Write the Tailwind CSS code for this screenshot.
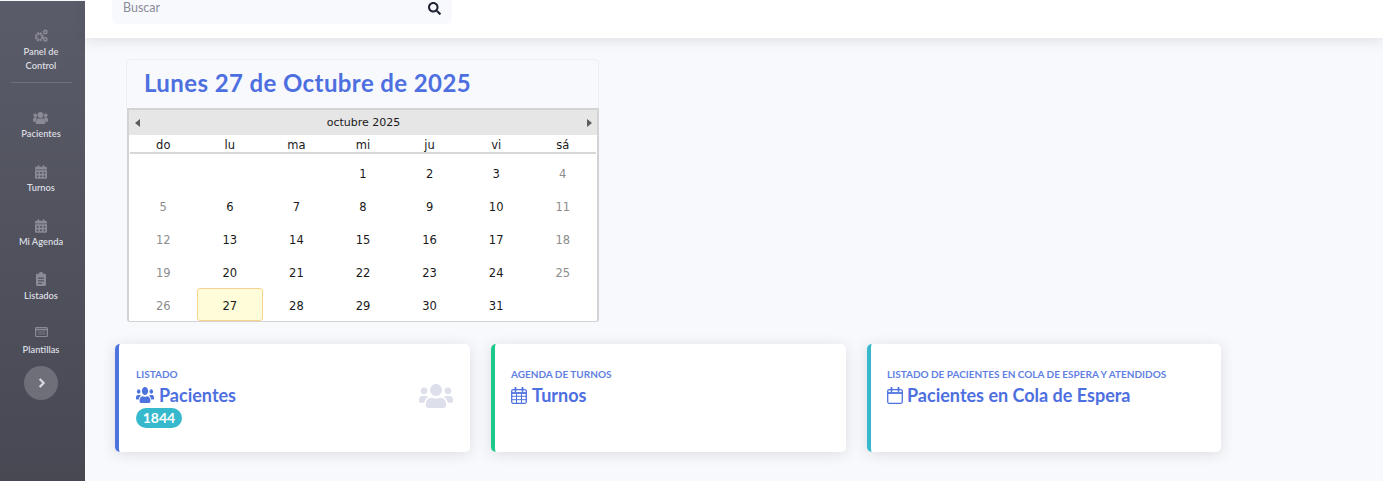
<!DOCTYPE html>
<html lang="es">
<head>
<meta charset="utf-8">
<title>Panel</title>
<script src="https://cdn.jsdelivr.net/npm/@tailwindcss/browser@4"></script>
</head>
<body class="w-[1383px] h-[481px] overflow-hidden bg-[#f8f9fc] font-['Lato',sans-serif]">
<div class="flex h-[481px]">
  <aside class="w-[85px] h-[480px] mt-px pr-[3px] shrink-0 bg-gradient-to-b from-[#5a5c69] to-[#474852] flex flex-col items-center text-[9.3px] leading-[14px] font-semibold text-[#dcdde2]">
    <div class="h-[82px] w-[61px] shrink-0 border-b border-[#6f7079] flex flex-col items-center pt-[28px]">
      <svg class="w-[14px] h-[13px] mb-[3px]" viewBox="0 0 16 15" fill="none" stroke="#8a8b95"><circle cx="6" cy="9" r="3.700" stroke-width="3" stroke-dasharray="2.200 .7"/><circle cx="13" cy="3.500" r="1.900" stroke-width="1.800"/><circle cx="13" cy="12" r="1.900" stroke-width="1.800"/></svg>
      <span class="text-center">Panel de<br>Control</span>
    </div>
    <div class="h-[26px] shrink-0"></div>
    <a class="h-[54px] flex flex-col items-center shrink-0">
      <svg class="w-[15px] h-[12px] mt-[3px] mb-[3px]" viewBox="0 32 640 448" preserveAspectRatio="none" fill="#8a8b95" stroke="#8a8b95" stroke-width="30"><path d="M96 224c35.300 0 64-28.700 64-64s-28.700-64-64-64-64 28.700-64 64 28.700 64 64 64zm448 0c35.300 0 64-28.700 64-64s-28.700-64-64-64-64 28.700-64 64 28.700 64 64 64zm32 32h-64c-17.600 0-33.500 7.100-45.100 18.600 40.300 22.100 68.900 62 75.100 109.400h66c17.700 0 32-14.300 32-32v-32c0-35.300-28.700-64-64-64zm-256 0c61.900 0 112-50.100 112-112S381.900 32 320 32 208 82.100 208 144s50.100 112 112 112zm76.800 32h-8.300c-20.800 10-43.900 16-68.500 16s-47.600-6-68.500-16h-8.300C179.600 288 128 339.600 128 403.200V432c0 26.500 21.500 48 48 48h288c26.500 0 48-21.500 48-48v-28.800c0-63.600-51.600-115.200-115.200-115.200zm-223.700-13.400C161.500 263.100 145.600 256 128 256H64c-35.300 0-64 28.700-64 64v32c0 17.700 14.300 32 32 32h65.900c6.300-47.400 34.900-87.300 75.200-109.400z"/></svg>
      <span>Pacientes</span>
    </a>
    <a class="h-[54px] flex flex-col items-center shrink-0">
      <svg class="w-[12px] h-[14px] mt-[2px] mb-[2px]" viewBox="0 0 448 512" fill="#8a8b95"><path d="M0 464c0 26.500 21.500 48 48 48h352c26.500 0 48-21.500 48-48V192H0v272zm320-196c0-6.600 5.400-12 12-12h40c6.600 0 12 5.400 12 12v40c0 6.600-5.400 12-12 12h-40c-6.600 0-12-5.400-12-12v-40zm0 128c0-6.600 5.400-12 12-12h40c6.600 0 12 5.400 12 12v40c0 6.600-5.400 12-12 12h-40c-6.600 0-12-5.400-12-12v-40zM192 268c0-6.600 5.400-12 12-12h40c6.600 0 12 5.400 12 12v40c0 6.600-5.400 12-12 12h-40c-6.600 0-12-5.400-12-12v-40zm0 128c0-6.600 5.400-12 12-12h40c6.600 0 12 5.400 12 12v40c0 6.600-5.400 12-12 12h-40c-6.600 0-12-5.400-12-12v-40zM64 268c0-6.600 5.400-12 12-12h40c6.600 0 12 5.400 12 12v40c0 6.600-5.400 12-12 12H76c-6.600 0-12-5.400-12-12v-40zm0 128c0-6.600 5.400-12 12-12h40c6.600 0 12 5.400 12 12v40c0 6.600-5.400 12-12 12H76c-6.600 0-12-5.400-12-12v-40zM400 64h-48V16c0-8.800-7.200-16-16-16h-32c-8.800 0-16 7.200-16 16v48H160V16c0-8.800-7.200-16-16-16h-32c-8.800 0-16 7.200-16 16v48H48C21.500 64 0 85.500 0 112v48h448v-48c0-26.500-21.500-48-48-48z"/></svg>
      <span>Turnos</span>
    </a>
    <a class="h-[54px] flex flex-col items-center shrink-0">
      <svg class="w-[12px] h-[14px] mt-[2px] mb-[2px]" viewBox="0 0 448 512" fill="#8a8b95"><path d="M0 464c0 26.500 21.500 48 48 48h352c26.500 0 48-21.500 48-48V192H0v272zm320-196c0-6.600 5.400-12 12-12h40c6.600 0 12 5.400 12 12v40c0 6.600-5.400 12-12 12h-40c-6.600 0-12-5.400-12-12v-40zm0 128c0-6.600 5.400-12 12-12h40c6.600 0 12 5.400 12 12v40c0 6.600-5.400 12-12 12h-40c-6.600 0-12-5.400-12-12v-40zM192 268c0-6.600 5.400-12 12-12h40c6.600 0 12 5.400 12 12v40c0 6.600-5.400 12-12 12h-40c-6.600 0-12-5.400-12-12v-40zm0 128c0-6.600 5.400-12 12-12h40c6.600 0 12 5.400 12 12v40c0 6.600-5.400 12-12 12h-40c-6.600 0-12-5.400-12-12v-40zM64 268c0-6.600 5.400-12 12-12h40c6.600 0 12 5.400 12 12v40c0 6.600-5.400 12-12 12H76c-6.600 0-12-5.400-12-12v-40zm0 128c0-6.600 5.400-12 12-12h40c6.600 0 12 5.400 12 12v40c0 6.600-5.400 12-12 12H76c-6.600 0-12-5.400-12-12v-40zM400 64h-48V16c0-8.800-7.200-16-16-16h-32c-8.800 0-16 7.200-16 16v48H160V16c0-8.800-7.200-16-16-16h-32c-8.800 0-16 7.200-16 16v48H48C21.500 64 0 85.500 0 112v48h448v-48c0-26.500-21.500-48-48-48z"/></svg>
      <span>Mi Agenda</span>
    </a>
    <a class="h-[54px] flex flex-col items-center shrink-0">
      <svg class="w-[10px] h-[14px] mt-[1px] mb-[3px]" viewBox="0 0 10 14" fill="#8a8b95"><path d="M3.200 1.800V1.200C3.200.6 3.700 0 4.400 0h1.200c.7 0 1.200.6 1.200 1.200v.6h2C9.500 1.800 10 2.300 10 3v9.800c0 .7-.5 1.200-1.200 1.200H1.200C.5 14 0 13.500 0 12.800V3c0-.7.5-1.200 1.200-1.200zM2 5.500v1.200h6V5.500zm0 2.800v1.200h6V8.300zm0 2.600v1h4v-1z"/></svg>
      <span>Listados</span>
    </a>
    <a class="h-[41px] flex flex-col items-center shrink-0">
      <svg class="w-[13px] h-[12px] mt-px mb-[5px]" viewBox="0 0 13 12" fill="none" stroke="#8a8b95"><rect x=".6" y="1.500" width="11.800" height="9" rx="1" stroke-width="1.200"/><path d="M.5 3.500h12" stroke-width="1.600"/><path d="M2.500 6h8M2.500 8h8" stroke-width="1.200" opacity=".7"/></svg>
      <span>Plantillas</span>
    </a>
    <button class="w-[34px] h-[34px] rounded-full bg-[#6e6f79] flex items-center justify-center shrink-0">
      <svg class="w-[8px] h-[10px] ml-px" viewBox="0 0 320 512" fill="#dcdde2" stroke="#dcdde2" stroke-width="40"><path d="M285.476 272.971L91.132 467.314c-9.373 9.373-24.569 9.373-33.941 0l-22.667-22.667c-9.357-9.357-9.373-24.522-.036-33.901L188.505 256 34.484 101.255c-9.337-9.379-9.321-24.544.036-33.901l22.667-22.667c9.373-9.373 24.569-9.373 33.941 0L285.475 239.030c9.373 9.372 9.373 24.568.001 33.941z"/></svg>
    </button>
  </aside>

  <main class="flex-1 min-w-0">
    <header class="h-[38px] bg-white shadow-[0_2px_14px_rgba(58,59,69,0.14)] pl-[27px]">
      <div class="w-[340px] h-[24px] bg-[#f8f9fc] rounded-b-[5px] flex items-start justify-between pl-[11px] pr-[11px]">
        <span class="text-[12.500px] leading-[16px] text-[#8a8c99]">Buscar</span>
        <svg class="w-[13px] h-[13px] mt-[2px]" viewBox="0 0 512 512" fill="#1f2433"><path d="M505 442.700L405.300 343c-4.500-4.500-10.600-7-17-7H372c27.600-35.300 44-79.700 44-128C416 93.100 322.900 0 208 0S0 93.100 0 208s93.100 208 208 208c48.300 0 92.700-16.400 128-44v16.300c0 6.400 2.500 12.500 7 17l99.700 99.700c9.400 9.400 24.600 9.400 33.900 0l28.300-28.300c9.400-9.400 9.400-24.600.1-34zM208 336c-70.700 0-128-57.200-128-128 0-70.700 57.200-128 128-128 70.700 0 128 57.200 128 128 0 70.700-57.200 128-128 128z"/></svg>
      </div>
    </header>

    <section class="ml-[41px] mt-[21px] w-[473px]">
      <div class="h-[49px] bg-[#f8f9fd] border border-b-0 border-[#eceef5] rounded-t-[5px] pl-[17px] pb-[2px] flex items-center">
        <h1 class="text-[24px] leading-[30px] font-bold text-[#4e6fdf] tracking-[0.4px]">Lunes 27 de Octubre de 2025</h1>
      </div>
      <div class="h-[214px] ml-px bg-white border-x-2 border-b border-[#d3d3d5] rounded-b-[3px] font-['DejaVu_Sans',sans-serif] text-[11.500px] text-[#1a1a1a]">
        <div class="h-[27px] bg-[#e6e6e6] border-t-2 border-[#d3d3d5] flex items-center justify-between pl-[6px] pr-[5px]">
          <svg class="w-[6px] h-[8px]" viewBox="0 0 6 8" fill="#5c5c5c"><path d="M5 0v8L0 4z"/></svg>
          <span class="text-[11px] mt-[2px]">octubre 2025</span>
          <svg class="w-[6px] h-[8px]" viewBox="0 0 6 8" fill="#5c5c5c"><path d="M1 0v8l5-4z"/></svg>
        </div>
        <div class="grid grid-cols-7 h-[19px] mx-[1px] border-b-2 border-[#d8d8d8] text-center leading-[21px]">
          <span>do</span><span>lu</span><span>ma</span><span>mi</span><span>ju</span><span>vi</span><span>sá</span>
        </div>
        <div class="grid grid-cols-7 grid-rows-5 h-[165px] mt-[2px] mx-[1px] text-center items-start leading-[37px]">
          <span></span><span></span><span></span><span>1</span><span>2</span><span>3</span><span class="text-[#8d8d8d]">4</span>
          <span class="text-[#8d8d8d]">5</span><span>6</span><span>7</span><span>8</span><span>9</span><span>10</span><span class="text-[#8d8d8d]">11</span>
          <span class="text-[#8d8d8d]">12</span><span>13</span><span>14</span><span>15</span><span>16</span><span>17</span><span class="text-[#8d8d8d]">18</span>
          <span class="text-[#8d8d8d]">19</span><span>20</span><span>21</span><span>22</span><span>23</span><span>24</span><span class="text-[#8d8d8d]">25</span>
          <span class="text-[#8d8d8d]">26</span><span class="h-[33px] leading-[35px] bg-[#fffcd9] border border-[#f8d38f] rounded-[3px]">27</span><span>28</span><span>29</span><span>30</span><span>31</span><span></span>
        </div>
      </div>
    </section>

    <section class="flex gap-[21px] ml-[30px] mt-[22px]">
      <article class="w-[355px] h-[108px] bg-white rounded-[5px] border-l-4 border-[#4e73df] shadow-[0_2px_14px_rgba(58,59,69,0.14)] pl-[17px] pr-[17px] pt-[23px] flex justify-between">
        <div>
          <p class="text-[10px] leading-[15px] font-bold text-[#5f7fe3] uppercase">Listado</p>
          <h2 class="mt-[2px] flex items-center gap-[5px] text-[18px] leading-[22px] font-bold text-[#4e6fdf]">
            <svg class="w-[18px] h-[16px]" viewBox="0 32 640 448" preserveAspectRatio="none" fill="#4e73df"><path d="M96 224c35.300 0 64-28.700 64-64s-28.700-64-64-64-64 28.700-64 64 28.700 64 64 64zm448 0c35.300 0 64-28.700 64-64s-28.700-64-64-64-64 28.700-64 64 28.700 64 64 64zm32 32h-64c-17.600 0-33.500 7.100-45.100 18.600 40.300 22.100 68.900 62 75.100 109.400h66c17.700 0 32-14.300 32-32v-32c0-35.300-28.700-64-64-64zm-256 0c61.900 0 112-50.100 112-112S381.900 32 320 32 208 82.100 208 144s50.100 112 112 112zm76.800 32h-8.300c-20.800 10-43.900 16-68.500 16s-47.600-6-68.500-16h-8.300C179.600 288 128 339.600 128 403.200V432c0 26.500 21.500 48 48 48h288c26.500 0 48-21.500 48-48v-28.800c0-63.600-51.600-115.200-115.200-115.200zm-223.700-13.400C161.500 263.100 145.600 256 128 256H64c-35.300 0-64 28.700-64 64v32c0 17.700 14.300 32 32 32h65.900c6.300-47.400 34.900-87.300 75.200-109.400z"/></svg>
            Pacientes
          </h2>
          <span class="mt-[2px] block w-[46px] h-[20px] rounded-full bg-[#36b9cc] text-white text-center text-[14px] leading-[20px] font-bold">1844</span>
        </div>
        <svg class="w-[34px] h-[24px] mt-[17px]" viewBox="0 32 640 448" preserveAspectRatio="none" fill="#dddfeb"><path d="M96 224c35.300 0 64-28.700 64-64s-28.700-64-64-64-64 28.700-64 64 28.700 64 64 64zm448 0c35.300 0 64-28.700 64-64s-28.700-64-64-64-64 28.700-64 64 28.700 64 64 64zm32 32h-64c-17.600 0-33.500 7.100-45.100 18.600 40.300 22.100 68.900 62 75.100 109.400h66c17.700 0 32-14.300 32-32v-32c0-35.300-28.700-64-64-64zm-256 0c61.900 0 112-50.100 112-112S381.900 32 320 32 208 82.100 208 144s50.100 112 112 112zm76.800 32h-8.300c-20.800 10-43.900 16-68.500 16s-47.600-6-68.500-16h-8.300C179.600 288 128 339.600 128 403.200V432c0 26.500 21.500 48 48 48h288c26.500 0 48-21.500 48-48v-28.800c0-63.600-51.600-115.200-115.200-115.200zm-223.700-13.400C161.500 263.100 145.600 256 128 256H64c-35.300 0-64 28.700-64 64v32c0 17.700 14.300 32 32 32h65.900c6.300-47.400 34.900-87.300 75.200-109.400z"/></svg>
      </article>
      <article class="w-[355px] h-[108px] bg-white rounded-[5px] border-l-4 border-[#1cc88a] shadow-[0_2px_14px_rgba(58,59,69,0.14)] pl-[16px] pt-[23px]">
        <p class="text-[10px] leading-[15px] font-bold text-[#5f7fe3] uppercase">Agenda de Turnos</p>
        <h2 class="mt-[2px] flex items-center gap-[5px] text-[18px] leading-[22px] font-bold text-[#4e6fdf]">
          <svg class="w-[16px] h-[17px]" viewBox="0 0 16 17" fill="none" stroke="#4e73df"><rect x=".7" y="2.700" width="14.600" height="13.600" rx="1.500" stroke-width="1.300"/><path d="M.7 6h14.600" stroke-width="1.800"/><path d="M5.500 6v10M10.500 6v10M1 9.300h14M1 12.700h14" stroke-width="1"/><path d="M4.500 .5v3.500M11.500 .5v3.500" stroke-width="1.800" stroke-linecap="round"/></svg>
          Turnos
        </h2>
      </article>
      <article class="w-[354px] h-[108px] bg-white rounded-[5px] border-l-4 border-[#36b9cc] shadow-[0_2px_14px_rgba(58,59,69,0.14)] pl-[16px] pt-[23px]">
        <p class="text-[10px] leading-[15px] font-bold text-[#5f7fe3] uppercase">Listado de Pacientes en Cola de Espera y Atendidos</p>
        <h2 class="mt-[2px] flex items-center gap-[4px] text-[18px] leading-[22px] font-bold text-[#4e6fdf]">
          <svg class="w-[16px] h-[17px]" viewBox="0 0 16 17" fill="none" stroke="#4e73df"><rect x=".7" y="2.700" width="14.600" height="13.600" rx="1.500" stroke-width="1.300"/><path d="M.7 6h14.600" stroke-width="1.800"/><path d="M4.500 .5v3.500M11.500 .5v3.500" stroke-width="1.800" stroke-linecap="round"/></svg>
          Pacientes en Cola de Espera
        </h2>
      </article>
    </section>
  </main>
</div>
</body>
</html>
